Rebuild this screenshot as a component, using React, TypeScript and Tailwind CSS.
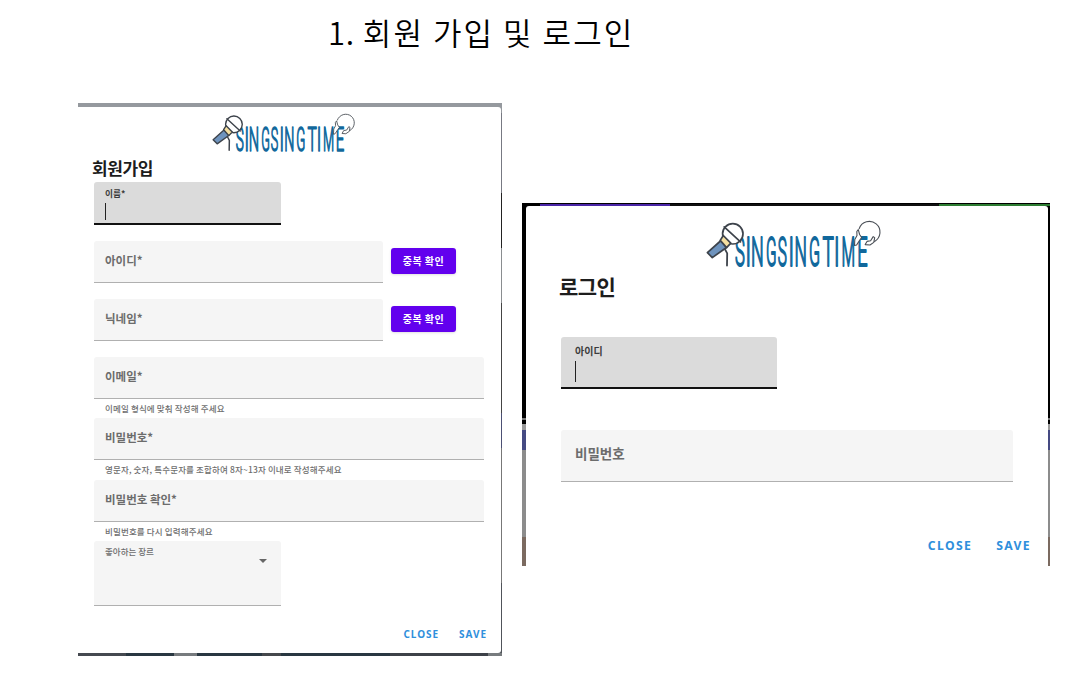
import React from "react";
import clsx from "clsx";

const LETTERS: [string, number, number][] = [
  ["S", 28.9, 0.4],
  ["I", 39.6, 0.5],
  ["N", 44.9, 0.43],
  ["G", 60.1, 0.37],
  ["S", 71.8, 0.37],
  ["I", 82.4, 0.5],
  ["N", 88.4, 0.42],
  ["G", 103, 0.39],
  ["T", 116.6, 0.46],
  ["I", 128.1, 0.5],
  ["M", 135.6, 0.38],
  ["E", 151.2, 0.44],
];

function Logo({ className }: { className: string }) {
  return (
    <svg viewBox="0 0 176 50" className={clsx("overflow-visible", className)} role="img" aria-label="SINGSINGTIME">
      <g
        fill="#11689c"
        stroke="#11689c"
        strokeWidth="1.9"
        strokeLinejoin="round"
        fontFamily="Roboto, sans-serif"
        fontSize="41.5"
        fontWeight="300"
      >
        {LETTERS.map(([ch, x, sx], i) => (
          <text key={i} transform={`translate(${x} 46) scale(${sx} 1)`}>
            {ch}
          </text>
        ))}
      </g>
      <g stroke="#3d434b" strokeWidth="1.7" strokeLinejoin="round" strokeLinecap="round">
        <path d="M15 20.5 20.5 27.5 6.3 37.6 1.4 32.6Z" fill="#6e93bd" />
        <circle cx="26.8" cy="13.8" r="10.2" fill="#fff" />
        <path d="M18.2 6.9 34.5 21.9" fill="none" />
        <path d="M17.3 15.5 24.8 23.2 20.6 27.6 14.2 20.4Z" fill="#f5dfa0" />
        <path d="M19.2 29.6 21.2 33.4 21 45.6" fill="none" strokeWidth="1.8" />
      </g>
      <g stroke="#4b5057" strokeWidth="1.1" strokeLinejoin="round" strokeLinecap="round" fill="#fff">
        <path d="M153.2 8.6A10.7 10.7 0 1 1 168.6 21.4" fill="none" />
        <path d="M148.5 25.5 148.8 19.5 151 15.5 150.8 11.5 152.3 9.6 153.6 14.5 155.7 17.5 153.6 20.4 150.6 25Z" />
        <path d="M159.2 24.6 161 21.4 164.6 20.8 167.2 16.6 168.7 17.6 167.8 22.4 164 25Z" />
      </g>
    </svg>
  );
}

type FieldProps = { label: string; className: string };

function Field({ label, className }: FieldProps) {
  return (
    <div
      className={clsx(
        "flex items-center rounded-t-[3px] border-b border-[#b0b0b0] bg-[#f5f5f5] font-bold text-[#6c6c6c]",
        className,
      )}
    >
      <span className="whitespace-nowrap leading-4">{label}</span>
    </div>
  );
}

function FocusedField({ label, className, caret }: FieldProps & { caret: string }) {
  return (
    <div
      className={clsx(
        "flex flex-col rounded-t-[3px] border-b-2 border-[#111] bg-[#dbdbdb] font-bold text-[#3c3c3c]",
        className,
      )}
    >
      <span className="whitespace-nowrap leading-3">{label}</span>
      <span className={clsx("w-px bg-[#222]", caret)} />
    </div>
  );
}

function CheckRow({ label }: { label: string }) {
  return (
    <div className="mt-4 flex items-center">
      <Field label={label} className="h-[42px] w-[289px] pb-[3px] pl-[11px] text-[11.5px]" />
      <button className="mb-[3px] ml-2 h-[26px] w-[65px] rounded-[3px] bg-[#6200ee] text-[10px] font-bold tracking-[0.5px] text-white shadow-sm">
        중복 확인
      </button>
    </div>
  );
}

function HelpedField({ label, help }: { label: string; help: string }) {
  return (
    <div className="h-[61.3px]">
      <Field label={label} className="h-[42px] w-[390px] pb-[3px] pl-[11px] text-[11.5px]" />
      <p className="pt-[3px] pl-[11px] text-[8.5px] leading-3 font-medium tracking-[0.14px] whitespace-nowrap text-[#6e6e6e]">
        {help}
      </p>
    </div>
  );
}

function SignUp() {
  return (
    <section className="h-[553px] w-[424px] bg-[linear-gradient(90deg,#95999e,#95999e),linear-gradient(90deg,#454950_0_48px,#293741_48px_96px,#777b7e_96px_119px,#293741_119px_184px,#45484c_184px_203px,#293741_203px_312px,#3d4148_312px_410px,#777b7e_410px_424px),linear-gradient(180deg,#95999e_0_10px,#777982_10px_90px,#222_90px_145px,#8a8d90_145px_200px,#444_200px_310px,#4c5074_310px_345px,#777_345px_480px,#50545a_480px_553px)] bg-[length:100%_4px,100%_3px,100%_100%] bg-[position:top,bottom,top] bg-no-repeat pt-1 pr-px pb-[3px]">
      <div className="flex h-full w-full flex-col rounded-r-[3px] bg-white pl-4">
        <Logo className="mt-[6px] ml-[118px] h-[41px] w-[144px] shrink-0" />
        <h2 className="mt-1 -ml-0.5 text-[17px] leading-5 font-bold tracking-[-0.4px] text-[#1d1d1d]">회원가입</h2>
        <FocusedField
          label="이름*"
          className="mt-1 h-[43px] w-[187px] pt-[6px] pl-[11px] text-[8.7px]"
          caret="mt-[3px] h-[17px]"
        />
        <CheckRow label="아이디*" />
        <CheckRow label="닉네임*" />
        <div className="mt-4">
          <HelpedField label="이메일*" help="이메일 형식에 맞춰 작성해 주세요" />
          <HelpedField label="비밀번호*" help="영문자, 숫자, 특수문자를 조합하여 8자~13자 이내로 작성해주세요" />
          <HelpedField label="비밀번호 확인*" help="비밀번호를 다시 입력해주세요" />
        </div>
        <div className="flex h-[65px] w-[187px] shrink-0 justify-between rounded-t-[3px] border-b border-[#b0b0b0] bg-[#f5f5f5] pt-[4px] pr-[14px] pl-[11px]">
          <span className="text-[8.5px] leading-3 font-medium text-[#6c6c6c]">좋아하는 장르</span>
          <svg viewBox="0 0 8 4" className="mt-[14px] h-1 w-2">
            <path d="M0 0h8L4 4Z" fill="#666" />
          </svg>
        </div>
        <div className="mt-5 flex justify-end gap-[20px] pr-[14px] font-['Noto_Sans',sans-serif] text-[10px] leading-4 font-bold tracking-[0.95px] text-[#2f8fdc]">
          <button>CLOSE</button>
          <button>SAVE</button>
        </div>
      </div>
    </section>
  );
}

function Login() {
  return (
    <section className="mt-[100px] ml-5 h-[363px] w-[528px] bg-[linear-gradient(90deg,#000,#000),linear-gradient(90deg,#000_0_18px,#4a25a8_18px_148px,#111_148px_417px,#2d7d32_417px_528px),linear-gradient(180deg,#000_0_215px,#777_215px_217px,#000_217px_221px,#999_221px_227px,#454a82_227px_247px,#8c8c8c_247px_334px,#7b6a60_334px_363px)] bg-[length:100%_1px,100%_3px,100%_100%] bg-no-repeat pt-[3px] pr-[2px] pl-1">
      <div className="flex h-full w-full flex-col rounded-t-[3px] bg-white pl-[35px]">
        <Logo className="mt-[14px] ml-[145px] h-[50px] w-[176px] shrink-0" />
        <h2 className="mt-1 -ml-0.5 text-[21px] leading-6 font-bold tracking-[-0.6px] text-[#1d1d1d]">로그인</h2>
        <FocusedField
          label="아이디"
          className="mt-[39px] h-[52px] w-[216px] pt-[8px] pl-[14px] text-[10px]"
          caret="mt-1 h-[21px]"
        />
        <Field label="비밀번호" className="mt-[41px] h-[52px] w-[452px] pb-1.5 pl-[14px] text-[13.5px]" />
        <div className="mt-14 flex justify-end gap-[24px] pr-[17px] font-['Noto_Sans',sans-serif] text-[12.2px] leading-4 font-bold tracking-[1.35px] text-[#2f8fdc]">
          <button>CLOSE</button>
          <button>SAVE</button>
        </div>
      </div>
    </section>
  );
}

export default function App() {
  return (
    <main className="h-[674px] w-[1074px] overflow-hidden bg-white font-['Noto_Sans_CJK_KR',sans-serif]">
      <h1 className="h-[103px] pt-[12px] pl-[328px] text-[31px] leading-10 font-[350] tracking-[2.05px] whitespace-nowrap text-black">
        <span className="tracking-[0.85px]">1. </span>회원 가입 및 로그인
      </h1>
      <div className="flex items-start pl-[78px]">
        <SignUp />
        <Login />
      </div>
    </main>
  );
}
